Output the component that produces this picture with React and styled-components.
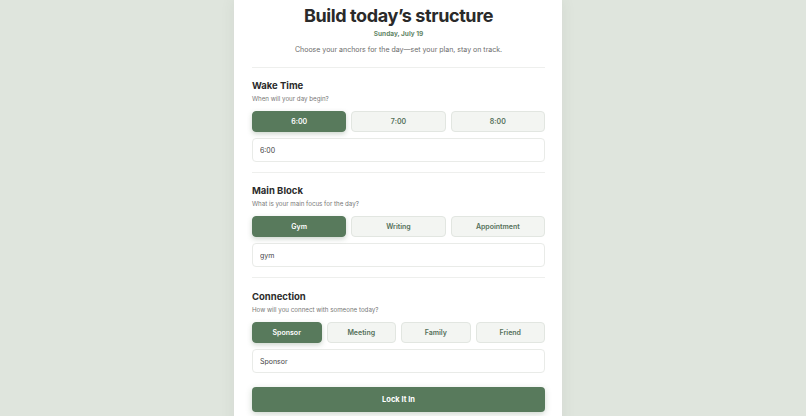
import React, { useState } from "react";
import styled, { createGlobalStyle, css } from "styled-components";

const Global = createGlobalStyle`
  html, body { margin: 0; padding: 0; background: #dfe5dd; overflow: hidden; }
  body { font-family: Inter, "Noto Sans", "Liberation Sans", sans-serif; color: #2b2b2b; }
  * { box-sizing: border-box; }
`;

const Page = styled.div`
  min-height: 416px;
  padding-right: 10px;
  display: flex;
  justify-content: center;
`;

const Card = styled.main`
  width: 328px;
  background: #ffffff;
  padding: 4px 17px 20px 18px;
  box-shadow: 0 0 14px rgba(60, 80, 60, 0.08);
`;

const Header = styled.header`
  text-align: center;
  padding-bottom: 12px;
  border-bottom: 1px solid #eeefed;
`;

const Title = styled.h1`
  margin: 0;
  font-size: 18px;
  line-height: 24px;
  font-weight: 700;
  letter-spacing: -0.4px;
  color: #2a2a2a;
`;

const DateLine = styled.div`
  margin-top: 1px;
  font-size: 6.5px;
  line-height: 10px;
  font-weight: 700;
  color: #628566;
`;

const Lead = styled.p`
  margin: 5px 0 0;
  font-size: 7px;
  line-height: 11px;
  color: #6b6b6b;
`;

const Section = styled.section`
  padding: 12px 0 10px;
  ${(p) => !p.$last && css`border-bottom: 1px solid #eeefed;`}
  ${(p) => p.$last && css`padding-top: 13px; padding-bottom: 0;`}
`;

const SectionTitle = styled.h2`
  margin: 0;
  font-size: 9.5px;
  line-height: 12px;
  font-weight: 700;
  color: #2b2b2b;
`;

const Hint = styled.div`
  margin-top: 2px;
  font-size: 6.2px;
  line-height: 10px;
  color: #777;
`;

const Options = styled.div`
  margin-top: 7px;
  display: grid;
  grid-template-columns: repeat(${(p) => p.$cols}, 1fr);
  gap: 5px;
`;

const Option = styled.button`
  height: 21px;
  border-radius: 4px;
  font-family: inherit;
  font-size: 7px;
  font-weight: 600;
  cursor: pointer;
  padding: 0;
  ${(p) =>
    p.$active
      ? css`
          background: #587a5c;
          border: 1px solid #587a5c;
          color: #ffffff;
          box-shadow: 0 2px 5px rgba(60, 90, 60, 0.25);
        `
      : css`
          background: #f3f5f2;
          border: 1px solid #e2e6e1;
          color: #55705a;
        `}
`;

const Field = styled.input`
  display: block;
  width: 100%;
  margin-top: 6px;
  height: 24px;
  border: 1px solid #e9ebe8;
  border-radius: 4px;
  padding: 0 7px;
  font-family: inherit;
  font-size: 7px;
  color: #444;
  background: #fff;
  outline: none;
`;

const Submit = styled.button`
  display: block;
  width: 100%;
  margin-top: 14px;
  height: 25px;
  border: none;
  border-radius: 4px;
  background: #587a5c;
  color: #fff;
  font-family: inherit;
  font-size: 7.5px;
  font-weight: 700;
  box-shadow: 0 2px 6px rgba(60, 90, 60, 0.25);
  cursor: pointer;
`;

const sections = [
  { key: "wake", title: "Wake Time", hint: "When will your day begin?", options: ["6:00", "7:00", "8:00"], value: "6:00" },
  { key: "main", title: "Main Block", hint: "What is your main focus for the day?", options: ["Gym", "Writing", "Appointment"], value: "gym" },
  { key: "conn", title: "Connection", hint: "How will you connect with someone today?", options: ["Sponsor", "Meeting", "Family", "Friend"], value: "Sponsor" },
];

export default function App() {
  const [values, setValues] = useState(() =>
    Object.fromEntries(sections.map((s) => [s.key, s.value]))
  );
  return (
    <Page>
      <Global />
      <Card>
        <Header>
          <Title>Build today’s structure</Title>
          <DateLine>Sunday, July 19</DateLine>
          <Lead>Choose your anchors for the day—set your plan, stay on track.</Lead>
        </Header>
        {sections.map((s, i) => (
          <Section key={s.key} $last={i === sections.length - 1}>
            <SectionTitle>{s.title}</SectionTitle>
            <Hint>{s.hint}</Hint>
            <Options $cols={s.options.length}>
              {s.options.map((o) => (
                <Option
                  key={o}
                  $active={values[s.key].toLowerCase() === o.toLowerCase()}
                  onClick={() => setValues({ ...values, [s.key]: s.key === "main" ? o.toLowerCase() : o })}
                >
                  {o}
                </Option>
              ))}
            </Options>
            <Field
              value={values[s.key]}
              onChange={(e) => setValues({ ...values, [s.key]: e.target.value })}
            />
            {i === sections.length - 1 && <Submit>Lock It In</Submit>}
          </Section>
        ))}
      </Card>
    </Page>
  );
}
